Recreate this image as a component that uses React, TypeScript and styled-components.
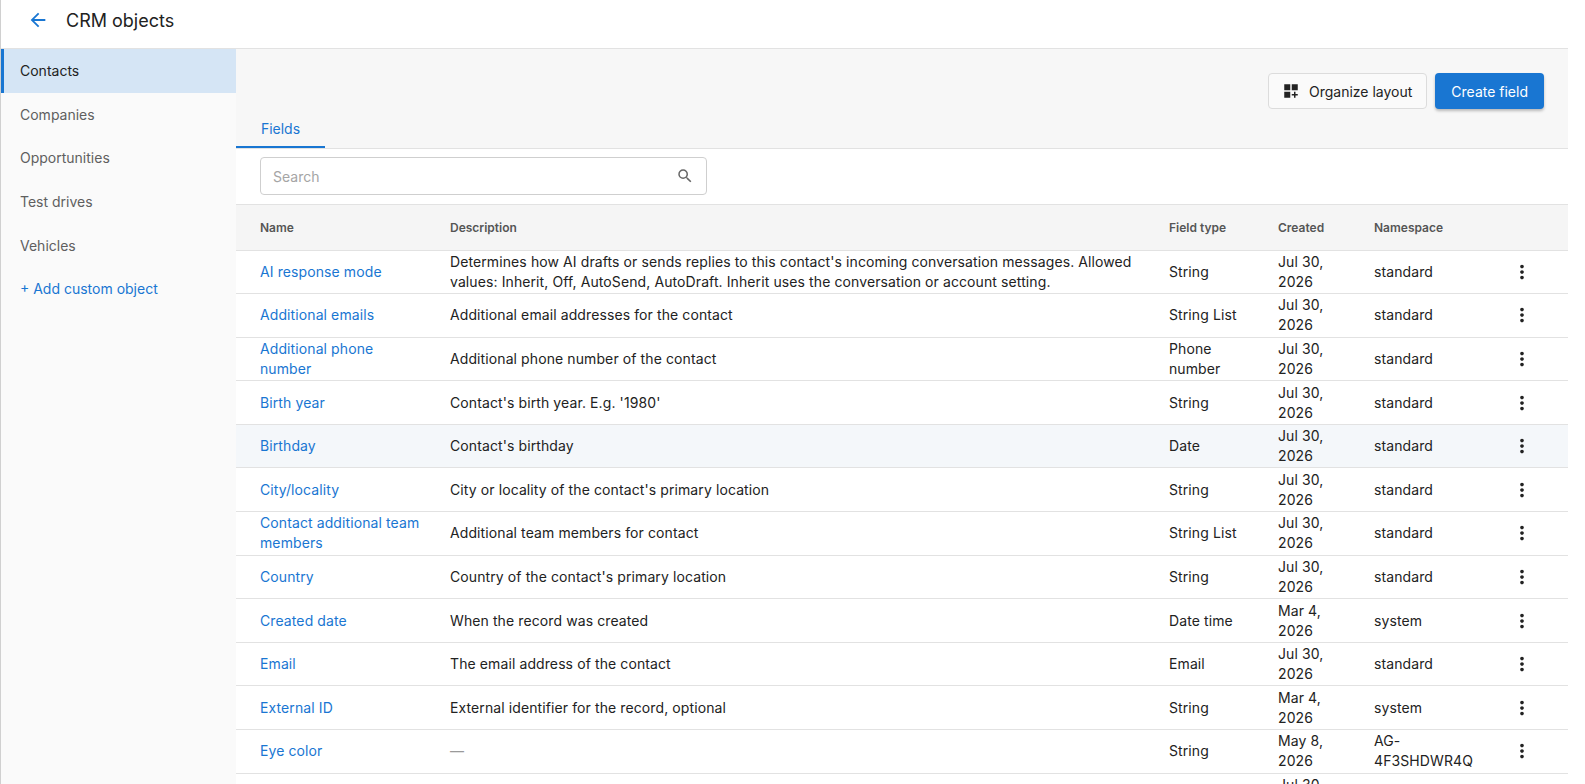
import styled, { createGlobalStyle } from 'styled-components';

const Global = createGlobalStyle`
  *, *::before, *::after { box-sizing: border-box; }
  html, body { margin: 0; padding: 0; }
  body { font-family: Inter, "Noto Sans", sans-serif; color: #212121; overflow: hidden; }
  ::-webkit-scrollbar { width: 15px; }
  ::-webkit-scrollbar-track { background: #fafafa; border-left: 1px solid #e8e8e8; }
  ::-webkit-scrollbar-thumb { background: #c2c2c2; border: 4px solid #fafafa; border-radius: 8px; }
`;

const Page = styled.div`
  display: flex;
  flex-direction: column;
  height: 100vh;
  width: 1568px;
  border-left: 1px solid #d0d0d0;
`;

const Header = styled.header`
  height: 49px;
  flex: none;
  display: flex;
  align-items: center;
  gap: 17px;
  padding-left: 26px;
  padding-bottom: 8px;
  border-bottom: 1px solid #e2e2e2;
`;

const Title = styled.h1`
  margin: 0;
  font-size: 18px;
  font-weight: 400;
  color: #222;
`;

const Body = styled.div`
  flex: 1;
  display: flex;
  min-height: 0;
`;

const Sidebar = styled.nav`
  width: 235px;
  flex: none;
  background: #fafafa;
  display: flex;
  flex-direction: column;
`;

const NavItem = styled.div<{ $active?: boolean; $link?: boolean }>`
  height: 43.6px;
  display: flex;
  align-items: center;
  padding-left: 16px;
  font-size: 14px;
  color: ${p => (p.$link ? '#1976d2' : p.$active ? '#222' : '#5f5f5f')};
  background: ${p => (p.$active ? '#d5e5f5' : 'transparent')};
  border-left: 3px solid ${p => (p.$active ? '#1976d2' : 'transparent')};
`;

const Main = styled.main`
  flex: 1;
  overflow-y: scroll;
  background: #fff;
`;

const TopBar = styled.div`
  background: #f7f7f7;
  border-bottom: 1px solid #e2e2e2;
  display: flex;
  flex-direction: column;
  height: 100px;
`;

const Actions = styled.div`
  display: flex;
  justify-content: flex-end;
  gap: 8px;
  padding: 24px 24px 0 0;
`;

const OutlineButton = styled.button`
  height: 36px;
  display: flex;
  align-items: center;
  gap: 9px;
  padding: 0 14px 0 13px;
  background: #fafafa;
  border: 1px solid #dcdcdc;
  border-radius: 4px;
  font: 400 14px Inter, sans-serif;
  color: #222;
`;

const PrimaryButton = styled.button`
  height: 36px;
  padding: 0 16px;
  background: #1976d2;
  border: none;
  border-radius: 4px;
  color: #fff;
  font: 400 14px Inter, sans-serif;
  box-shadow: 0 2px 3px rgba(0, 0, 0, 0.25);
`;

const Tabs = styled.div`
  margin-top: auto;
  display: flex;
`;

const Tab = styled.div`
  width: 89px;
  height: 34px;
  display: flex;
  align-items: center;
  justify-content: center;
  font-size: 14px;
  color: #1976d2;
  border-bottom: 2px solid #1976d2;
  padding-bottom: 4px;
`;

const SearchWrap = styled.div`
  padding: 8px 0 9px 24px;
  border-bottom: 1px solid #e2e2e2;
`;

const SearchBox = styled.div`
  width: 447px;
  height: 38px;
  border: 1px solid #cfcfcf;
  border-radius: 4px;
  display: flex;
  align-items: center;
  justify-content: space-between;
  padding: 0 12px;
  font-size: 14px;
  color: #a5a5a5;
`;

const Table = styled.table`
  width: 100%;
  table-layout: fixed;
  border-collapse: collapse;
  font-size: 14px;
`;

const Th = styled.th<{ $w?: number }>`
  width: ${p => (p.$w ? `${p.$w}px` : 'auto')};
  height: 45px;
  background: #f5f5f5;
  text-align: left;
  font-size: 12px;
  font-weight: 600;
  color: #555;
  padding: 0 4px 0 24px;
  border-bottom: 1px solid #e2e2e2;
`;

const Row = styled.tr<{ $hover?: boolean }>`
  background: ${p => (p.$hover ? '#f4f7fa' : '#fff')};
`;

const Td = styled.td<{ $muted?: boolean }>`
  height: 43.6px;
  padding: 0 4px 0 24px;
  line-height: 20px;
  color: ${p => (p.$muted ? '#9a9a9a' : '#222')};
  border-bottom: 1px solid #e2e2e2;
  vertical-align: middle;
  letter-spacing: 0.1px;
`;

const NameLink = styled.span`
  color: #1976d2;
`;

const KebabCell = styled.td`
  border-bottom: 1px solid #e2e2e2;
  padding: 0;
`;

const KebabWrap = styled.div`
  display: flex;
  justify-content: center;
`;

const Icon = ({ d, size = 20, color = '#222' }: { d: string; size?: number; color?: string }) => (
  <svg width={size} height={size} viewBox="0 0 24 24" fill={color} style={{ display: 'block' }}>
    <path d={d} />
  </svg>
);

const ARROW = 'M20 11H7.83l5.59-5.59L12 4l-8 8 8 8 1.41-1.41L7.83 13H20v-2z';
const DASH = 'M3 3h8v8H3zm10 0h8v8h-8zM3 13h8v8H3zm15 0h-2v3h-3v2h3v3h2v-3h3v-2h-3z';
const SEARCH = 'M15.5 14h-.79l-.28-.27A6.47 6.47 0 0 0 16 9.5 6.5 6.5 0 1 0 9.5 16c1.61 0 3.09-.59 4.230-1.57l.27.28v.79l5 4.99L20.49 19l-4.99-5zm-6 0C7.01 14 5 11.99 5 9.5S7.010 5 9.5 5 14 7.01 14 9.5 11.99 14 9.5 14z';
const MORE = 'M12 8c1.1 0 2-.9 2-2s-.9-2-2-2-2 .9-2 2 .9 2 2 2zm0 2c-1.1 0-2 .9-2 2s.9 2 2 2 2-.9 2-2-.9-2-2-2zm0 6c-1.1 0-2 .9-2 2s.9 2 2 2 2-.9 2-2-.9-2-2-2z';

const rows = [
  ['AI response mode', "Determines how AI drafts or sends replies to this contact's incoming conversation messages. Allowed values: Inherit, Off, AutoSend, AutoDraft. Inherit uses the conversation or account setting.", 'String', 'Jul 30, 2026', 'standard'],
  ['Additional emails', 'Additional email addresses for the contact', 'String List', 'Jul 30, 2026', 'standard'],
  ['Additional phone number', 'Additional phone number of the contact', 'Phone number', 'Jul 30, 2026', 'standard'],
  ['Birth year', "Contact's birth year. E.g. '1980'", 'String', 'Jul 30, 2026', 'standard'],
  ['Birthday', "Contact's birthday", 'Date', 'Jul 30, 2026', 'standard'],
  ['City/locality', "City or locality of the contact's primary location", 'String', 'Jul 30, 2026', 'standard'],
  ['Contact additional team members', 'Additional team members for contact', 'String List', 'Jul 30, 2026', 'standard'],
  ['Country', "Country of the contact's primary location", 'String', 'Jul 30, 2026', 'standard'],
  ['Created date', 'When the record was created', 'Date time', 'Mar 4, 2026', 'system'],
  ['Email', 'The email address of the contact', 'Email', 'Jul 30, 2026', 'standard'],
  ['External ID', 'External identifier for the record, optional', 'String', 'Mar 4, 2026', 'system'],
  ['Eye color', '—', 'String', 'May 8, 2026', 'AG-4F3SHDWR4Q'],
  ['First name', "Contact's first name", 'String', 'Jul 30, 2026', 'standard'],
];

export default function App() {
  return (
    <>
      <Global />
      <Page>
        <Header>
          <Icon d={ARROW} size={22} color="#1976d2" />
          <Title>CRM objects</Title>
        </Header>
        <Body>
          <Sidebar>
            <NavItem $active>Contacts</NavItem>
            <NavItem>Companies</NavItem>
            <NavItem>Opportunities</NavItem>
            <NavItem>Test drives</NavItem>
            <NavItem>Vehicles</NavItem>
            <NavItem $link>+ Add custom object</NavItem>
          </Sidebar>
          <Main>
            <TopBar>
              <Actions>
                <OutlineButton>
                  <Icon d={DASH} size={18} />
                  Organize layout
                </OutlineButton>
                <PrimaryButton>Create field</PrimaryButton>
              </Actions>
              <Tabs>
                <Tab>Fields</Tab>
              </Tabs>
            </TopBar>
            <SearchWrap>
              <SearchBox>
                Search
                <Icon d={SEARCH} size={18} color="#666" />
              </SearchBox>
            </SearchWrap>
            <Table>
              <thead>
                <tr>
                  <Th $w={190}>Name</Th>
                  <Th>Description</Th>
                  <Th $w={109}>Field type</Th>
                  <Th $w={96}>Created</Th>
                  <Th $w={126}>Namespace</Th>
                  <Th $w={92}></Th>
                </tr>
              </thead>
              <tbody>
                {rows.map(r => (
                  <Row key={r[0]} $hover={r[0] === 'Birthday'}>
                    <Td><NameLink>{r[0]}</NameLink></Td>
                    <Td $muted={r[1] === '—'}>{r[1]}</Td>
                    <Td>{r[2]}</Td>
                    <Td>{r[3]}</Td>
                    <Td>{r[4]}</Td>
                    <KebabCell>
                      <KebabWrap>
                        <Icon d={MORE} size={22} />
                      </KebabWrap>
                    </KebabCell>
                  </Row>
                ))}
              </tbody>
            </Table>
          </Main>
        </Body>
      </Page>
    </>
  );
}
